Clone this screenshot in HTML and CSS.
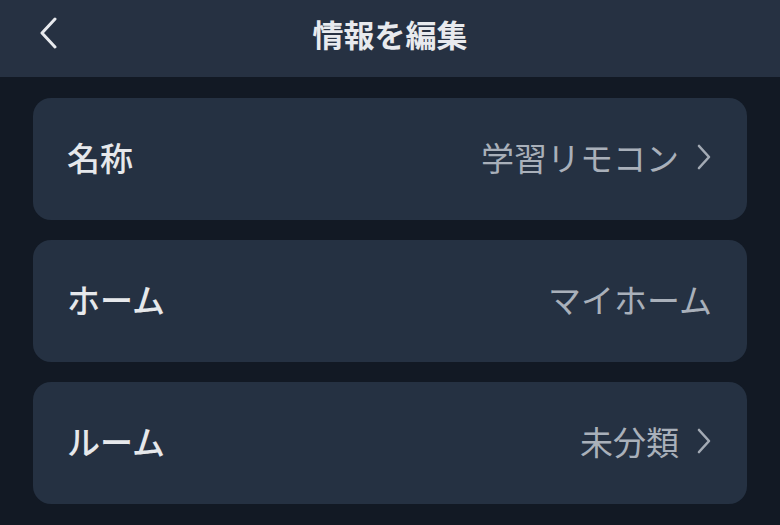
FILE: index.html
```html
<!DOCTYPE html>
<html lang="ja">
<head>
<meta charset="utf-8">
<link rel="stylesheet" href="styles.css">
</head>
<body>
<header class="topbar">
  <button class="back" aria-label="戻る">
    <svg width="20" height="32" viewBox="0 0 20 32"><path d="M17 2 L4 16 L17 30" fill="none" stroke="#e8eaee" stroke-width="3" stroke-linecap="round" stroke-linejoin="round"/></svg>
  </button>
  <h1 class="title">情報を編集</h1>
</header>
<main class="list">
  <div class="card">
    <span class="label">名称</span>
    <span class="value">学習リモコン<svg class="chev" width="16" height="26" viewBox="0 0 16 26"><path d="M3 2 L13 13 L3 24" fill="none" stroke="#a3aab4" stroke-width="2.6" stroke-linecap="round" stroke-linejoin="round"/></svg></span>
  </div>
  <div class="card">
    <span class="label">ホーム</span>
    <span class="value">マイホーム</span>
  </div>
  <div class="card">
    <span class="label">ルーム</span>
    <span class="value">未分類<svg class="chev" width="16" height="26" viewBox="0 0 16 26"><path d="M3 2 L13 13 L3 24" fill="none" stroke="#a3aab4" stroke-width="2.6" stroke-linecap="round" stroke-linejoin="round"/></svg></span>
  </div>
</main>
</body>
</html>
```
FILE: styles.css
```css
html, body {
  margin: 0;
  padding: 0;
  background: #121924;
  font-family: "Noto Sans CJK JP", "Noto Sans", sans-serif;
}
.topbar {
  height: 77px;
  background: #263142;
  display: flex;
  align-items: center;
  justify-content: center;
  position: relative;
}
.back {
  position: absolute;
  left: 38px;
  top: 17px;
  background: none;
  border: none;
  padding: 0;
  display: flex;
}
.title {
  margin: 0 0 10px 0;
  font-size: 31px;
  font-weight: 700;
  color: #e8eaee;
}
.list {
  padding: 21px 33px 0 33px;
  display: flex;
  flex-direction: column;
  gap: 20px;
}
.card {
  height: 122px;
  background: #253142;
  border-radius: 18px;
  display: flex;
  align-items: center;
  justify-content: space-between;
  padding: 0 35px 0 34px;
  box-sizing: border-box;
}
.label {
  font-size: 33px;
  font-weight: 500;
  color: #e6e8eb;
  margin-top: -4px;
}
.value {
  font-size: 33px;
  font-weight: 400;
  color: #a9b0ba;
  display: flex;
  align-items: center;
  margin-top: -4px;
}
.chev {
  margin-left: 17px;
}
```
